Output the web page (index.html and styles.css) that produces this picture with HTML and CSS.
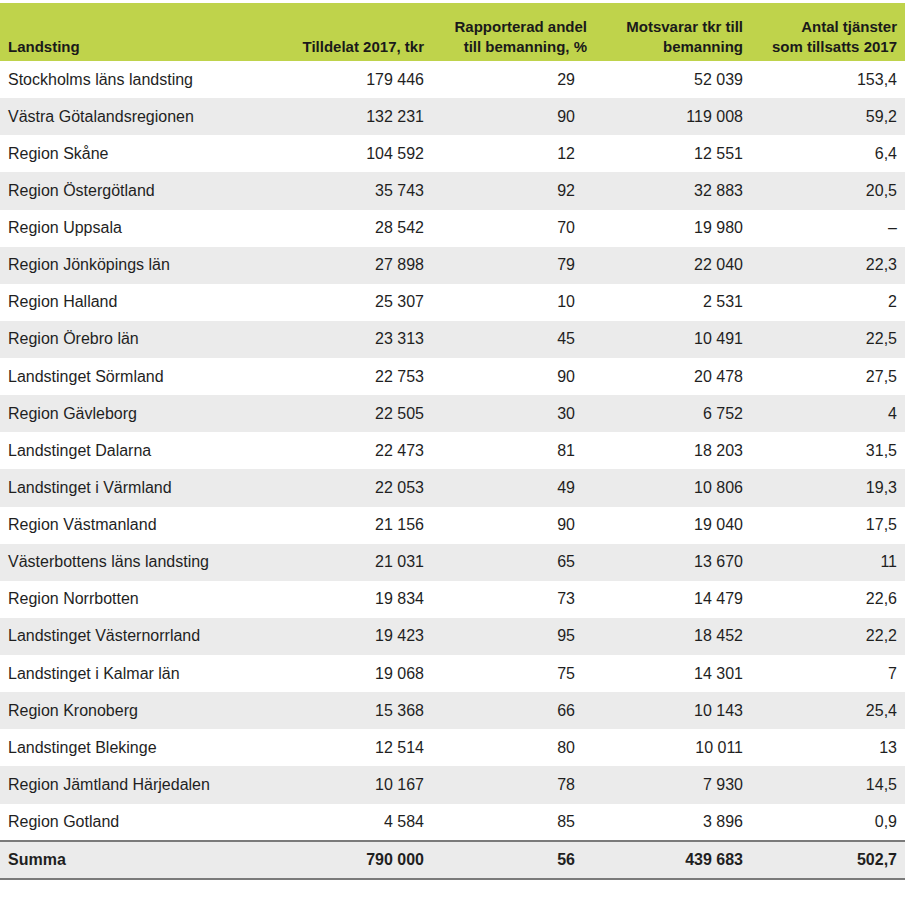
FILE: index.html
```html
<!DOCTYPE html>
<html lang="sv">
<head>
<meta charset="utf-8">
<title>Landsting</title>
<link rel="stylesheet" href="styles.css">
</head>
<body>
<table class="tbl">
  <colgroup>
    <col class="c1"><col class="c2"><col class="c3"><col class="c4"><col class="c5">
  </colgroup>
  <thead>
    <tr>
      <th class="name">Landsting</th>
      <th>Tilldelat 2017, tkr</th>
      <th>Rapporterad andel<br>till bemanning, %</th>
      <th>Motsvarar tkr till<br>bemanning</th>
      <th>Antal tjänster<br>som tillsatts 2017</th>
    </tr>
  </thead>
  <tbody>
    <tr><td class="name">Stockholms läns landsting</td><td>179 446</td><td class="pct">29</td><td>52 039</td><td>153,4</td></tr>
    <tr><td class="name">Västra Götalandsregionen</td><td>132 231</td><td class="pct">90</td><td>119 008</td><td>59,2</td></tr>
    <tr><td class="name">Region Skåne</td><td>104 592</td><td class="pct">12</td><td>12 551</td><td>6,4</td></tr>
    <tr><td class="name">Region Östergötland</td><td>35 743</td><td class="pct">92</td><td>32 883</td><td>20,5</td></tr>
    <tr><td class="name">Region Uppsala</td><td>28 542</td><td class="pct">70</td><td>19 980</td><td>–</td></tr>
    <tr><td class="name">Region Jönköpings län</td><td>27 898</td><td class="pct">79</td><td>22 040</td><td>22,3</td></tr>
    <tr><td class="name">Region Halland</td><td>25 307</td><td class="pct">10</td><td>2 531</td><td>2</td></tr>
    <tr><td class="name">Region Örebro län</td><td>23 313</td><td class="pct">45</td><td>10 491</td><td>22,5</td></tr>
    <tr><td class="name">Landstinget Sörmland</td><td>22 753</td><td class="pct">90</td><td>20 478</td><td>27,5</td></tr>
    <tr><td class="name">Region Gävleborg</td><td>22 505</td><td class="pct">30</td><td>6 752</td><td>4</td></tr>
    <tr><td class="name">Landstinget Dalarna</td><td>22 473</td><td class="pct">81</td><td>18 203</td><td>31,5</td></tr>
    <tr><td class="name">Landstinget i Värmland</td><td>22 053</td><td class="pct">49</td><td>10 806</td><td>19,3</td></tr>
    <tr><td class="name">Region Västmanland</td><td>21 156</td><td class="pct">90</td><td>19 040</td><td>17,5</td></tr>
    <tr><td class="name">Västerbottens läns landsting</td><td>21 031</td><td class="pct">65</td><td>13 670</td><td>11</td></tr>
    <tr><td class="name">Region Norrbotten</td><td>19 834</td><td class="pct">73</td><td>14 479</td><td>22,6</td></tr>
    <tr><td class="name">Landstinget Västernorrland</td><td>19 423</td><td class="pct">95</td><td>18 452</td><td>22,2</td></tr>
    <tr><td class="name">Landstinget i Kalmar län</td><td>19 068</td><td class="pct">75</td><td>14 301</td><td>7</td></tr>
    <tr><td class="name">Region Kronoberg</td><td>15 368</td><td class="pct">66</td><td>10 143</td><td>25,4</td></tr>
    <tr><td class="name">Landstinget Blekinge</td><td>12 514</td><td class="pct">80</td><td>10 011</td><td>13</td></tr>
    <tr><td class="name">Region Jämtland Härjedalen</td><td>10 167</td><td class="pct">78</td><td>7 930</td><td>14,5</td></tr>
    <tr><td class="name">Region Gotland</td><td>4 584</td><td class="pct">85</td><td>3 896</td><td>0,9</td></tr>
  </tbody>
  <tfoot>
    <tr><td class="name">Summa</td><td>790 000</td><td class="pct">56</td><td>439 683</td><td>502,7</td></tr>
  </tfoot>
</table>
</body>
</html>
```

FILE: styles.css
```css
html, body {
  margin: 0;
  padding: 0;
  background: #ffffff;
}
body {
  padding-top: 3px;
  font-family: "Liberation Sans", Arial, sans-serif;
  color: #1f1f1f;
}
.tbl {
  width: 905px;
  border-collapse: collapse;
  table-layout: fixed;
}
.c1 { width: 262px; }
.c2 { width: 170px; }
.c3 { width: 163px; }
.c4 { width: 156px; }
.c5 { width: 154px; }

.tbl th {
  box-sizing: border-box;
  background: #bfd34b;
  height: 58px;
  padding: 0 8px 4px 8px;
  vertical-align: bottom;
  text-align: right;
  font-size: 15px;
  font-weight: bold;
  line-height: 20px;
  color: #1a1a1a;
}
.tbl th.name,
.tbl td.name {
  text-align: left;
}
.tbl td {
  height: 37.14px;
  padding: 0 8px;
  box-sizing: border-box;
  text-align: right;
  vertical-align: middle;
  font-size: 16px;
  line-height: 20px;
}
.tbl td.pct {
  padding-right: 20px;
}
.tbl tbody tr:nth-child(even) td {
  background: #ebebeb;
}
.tbl tfoot td {
  background: #ebebeb;
  font-weight: bold;
  height: 38px;
  border-top: 2px solid #7a7a7a;
  border-bottom: 2px solid #7a7a7a;
}
```
